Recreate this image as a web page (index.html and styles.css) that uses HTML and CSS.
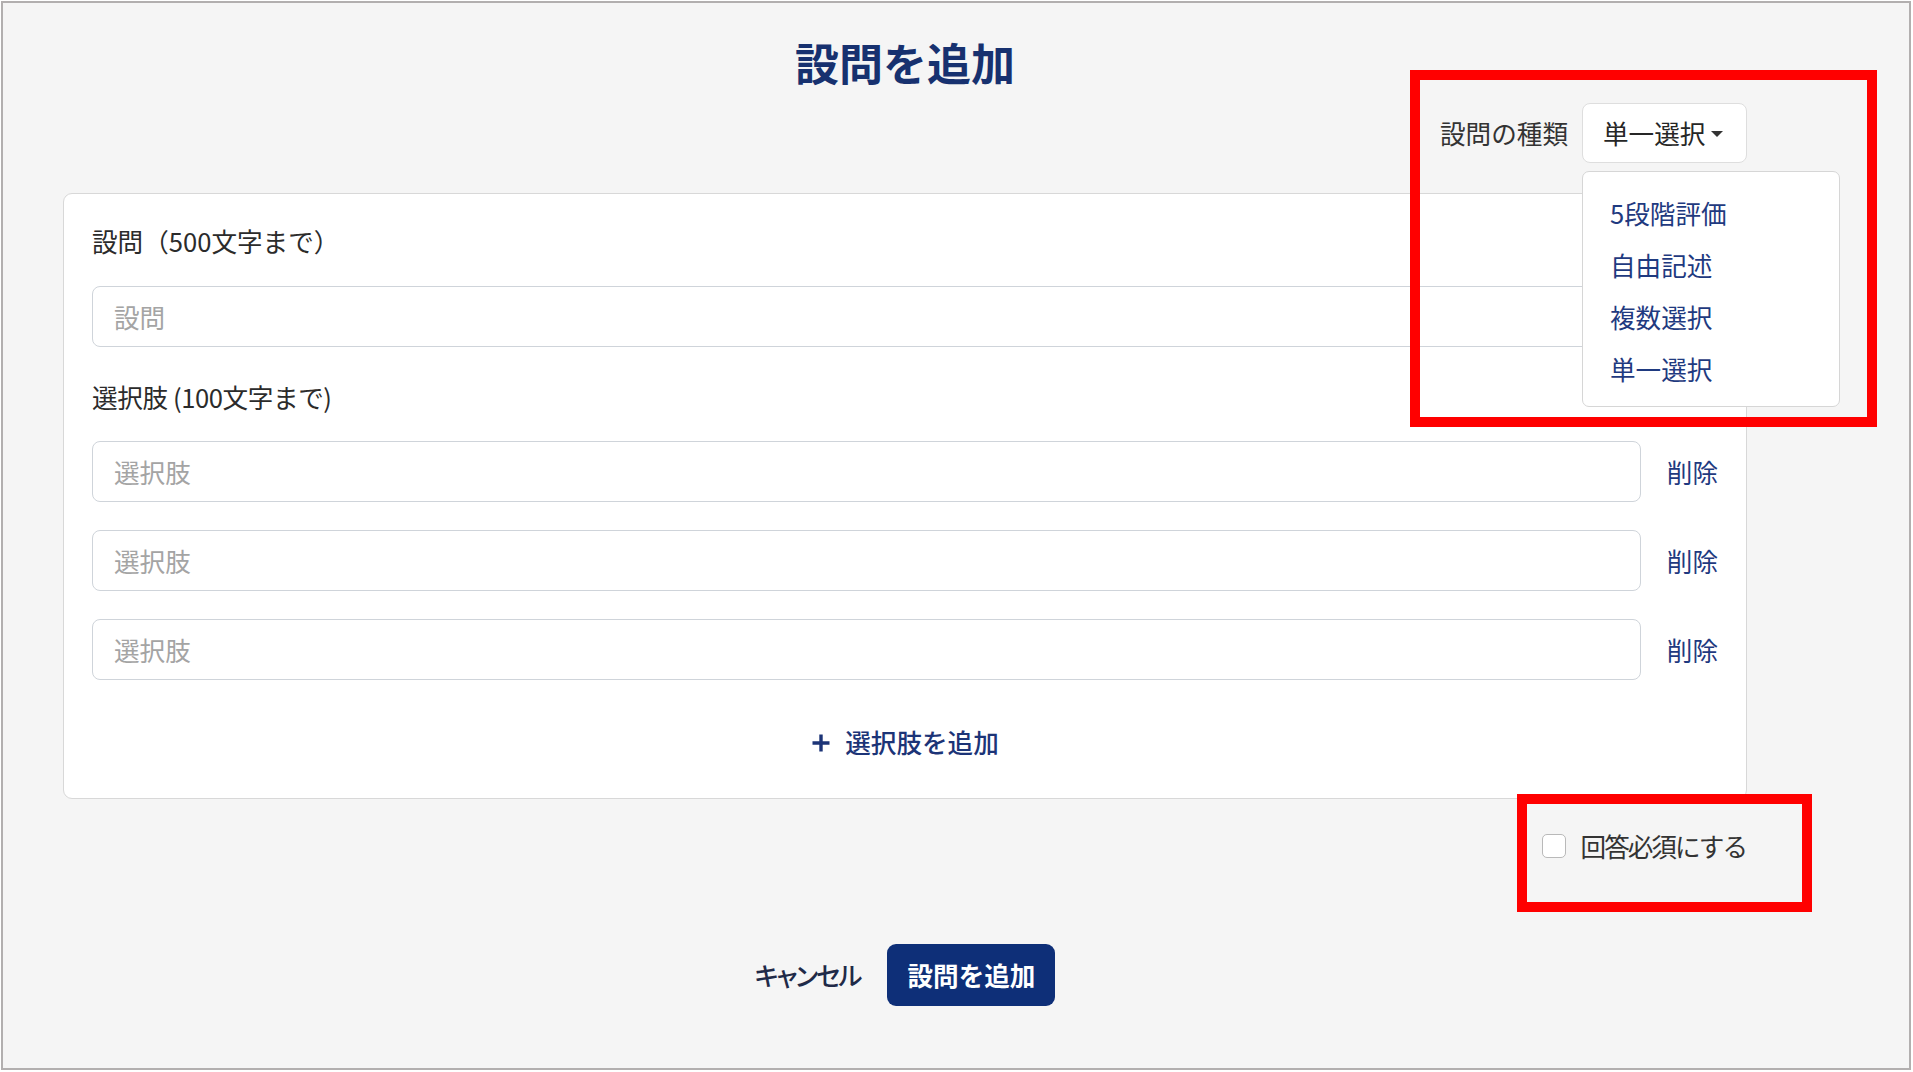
FILE: index.html
```html
<!DOCTYPE html>
<html lang="ja">
<head>
<meta charset="utf-8">
<title>設問を追加</title>
<link rel="stylesheet" href="styles.css">
</head>
<body>
<div class="frame">
  <div class="container">
    <h1 class="title">設問を追加</h1>

    <div class="type-row">
      <span class="type-label">設問の種類</span>
      <div class="dropdown">
        <button class="dropdown-toggle" type="button">単一選択<span class="caret"></span></button>
        <ul class="dropdown-menu">
          <li class="dropdown-item">5段階評価</li>
          <li class="dropdown-item">自由記述</li>
          <li class="dropdown-item">複数選択</li>
          <li class="dropdown-item">単一選択</li>
        </ul>
      </div>
    </div>

    <div class="card">
      <div class="field-label">設問（500文字まで）</div>
      <input class="text-input question-input" type="text" placeholder="設問">

      <div class="field-label options-label">選択肢 (100文字まで)</div>
      <div class="options">
        <div class="option-row">
          <input class="text-input" type="text" placeholder="選択肢">
          <span class="delete-link">削除</span>
        </div>
        <div class="option-row">
          <input class="text-input" type="text" placeholder="選択肢">
          <span class="delete-link">削除</span>
        </div>
        <div class="option-row">
          <input class="text-input" type="text" placeholder="選択肢">
          <span class="delete-link">削除</span>
        </div>
      </div>

      <div class="add-row">
        <span class="add-link">
          <svg class="plus" width="20" height="20" viewBox="0 0 20 20" aria-hidden="true">
            <path d="M10 1.5V18.5M1.5 10H18.5" stroke="currentColor" stroke-width="3.4" fill="none"/>
          </svg>
          <span>選択肢を追加</span>
        </span>
      </div>
    </div>

    <div class="required-row">
      <span class="checkbox"></span>
      <span class="required-label">回答必須にする</span>
    </div>

    <div class="actions">
      <span class="cancel">キャンセル</span>
      <button class="submit" type="button">設問を追加</button>
    </div>
  </div>
</div>

<div class="annotation annotation-type"></div>
<div class="annotation annotation-required"></div>
</body>
</html>
```

FILE: styles.css
```css
* {
  box-sizing: border-box;
}

html, body {
  margin: 0;
}

body {
  position: relative;
  width: 1913px;
  height: 1072px;
  padding: 1px;
  overflow: hidden;
  background: #ffffff;
  font-family: "Noto Sans CJK JP", "Noto Sans", sans-serif;
  font-size: 25.6px;
  line-height: 1.5;
  color: #2b2b2b;
}

.frame {
  width: 1910px;
  height: 1069px;
  border: 2px solid #b2afaf;
  background: #f5f5f5;
}

.container {
  width: 1684px;
  margin-left: 60px;
  padding-top: 33px;
}

.title {
  margin: 0;
  text-align: center;
  font-size: 44px;
  line-height: 53px;
  font-weight: 700;
  color: #17316f;
}

.type-row {
  display: flex;
  justify-content: flex-end;
  align-items: center;
  gap: 14px;
  margin-top: 14px;
  height: 60px;
}

.type-label {
  color: #333333;
}

.dropdown {
  position: relative;
  z-index: 2;
}

.dropdown-toggle {
  display: flex;
  align-items: center;
  height: 60px;
  width: 165px;
  padding: 0 19px 0 20px;
  border: 1px solid #dedede;
  border-radius: 8px;
  background: #ffffff;
  font: inherit;
  color: #262626;
}

.caret {
  display: inline-block;
  margin-left: 6px;
  margin-top: 2px;
  width: 0;
  height: 0;
  border-left: 6px solid transparent;
  border-right: 6px solid transparent;
  border-top: 6px solid #333333;
}

.dropdown-menu {
  position: absolute;
  top: calc(100% + 8px);
  left: 0;
  width: 258px;
  margin: 0;
  padding: 15px 0 11px;
  list-style: none;
  background: #ffffff;
  border: 1px solid #d6d6d6;
  border-radius: 7px;
}

.dropdown-item {
  height: 52px;
  line-height: 52px;
  padding: 0 27px;
  color: #1f3a80;
}

.card {
  margin-top: 30px;
  height: 606px;
  padding: 28px 28px 28px;
  background: #ffffff;
  border: 1px solid #d8d8d8;
  border-radius: 9px;
}

.field-label {
  line-height: 38.4px;
  margin-bottom: 25.6px;
  color: #2b2b2b;
}

.options-label {
  margin-top: 31px;
  margin-bottom: 25px;
  letter-spacing: -0.4px;
}

.text-input {
  display: block;
  width: 100%;
  height: 61px;
  padding: 0 21px;
  border: 1px solid #cfd4da;
  border-radius: 8px;
  background: #ffffff;
  font: inherit;
  color: #2b2b2b;
  outline: none;
}

.text-input::placeholder {
  color: #a4a4a4;
}

.options {
  display: flex;
  flex-direction: column;
  gap: 28px;
}

.option-row {
  display: flex;
  align-items: center;
  gap: 26px;
}

.option-row .text-input {
  flex: 1;
}

.delete-link {
  color: #1f3a80;
  white-space: nowrap;
}

.add-row {
  display: flex;
  justify-content: center;
  padding-top: 43px;
  line-height: 38.4px;
}

.add-link {
  display: inline-flex;
  align-items: center;
  gap: 14px;
  color: #1c3477;
  font-weight: 500;
}

.plus {
  display: block;
}

.required-row {
  display: flex;
  justify-content: flex-end;
  align-items: center;
  margin-top: 28px;
  line-height: 38.4px;
}

.checkbox {
  flex-shrink: 0;
  width: 24px;
  height: 24px;
  margin-right: 15px;
  border: 1.5px solid #b9b9b9;
  border-radius: 5px;
  background: #ffffff;
}

.required-label {
  color: #333333;
  letter-spacing: -2px;
  margin-right: 1px;
}

.actions {
  display: flex;
  justify-content: center;
  align-items: center;
  gap: 27px;
  margin-top: 79px;
}

.cancel {
  color: #1f2a48;
  font-weight: 500;
  font-feature-settings: "palt";
  letter-spacing: -2px;
}

.submit {
  height: 62px;
  padding: 0 20px;
  border: none;
  border-radius: 9px;
  background: #0e2f78;
  color: #ffffff;
  font: inherit;
  font-weight: 700;
}

.annotation {
  position: absolute;
  border: 10px solid #ff0000;
  pointer-events: none;
}

.annotation-type {
  left: 1410px;
  top: 70px;
  width: 467px;
  height: 357px;
}

.annotation-required {
  left: 1517px;
  top: 794px;
  width: 295px;
  height: 118px;
}
```
